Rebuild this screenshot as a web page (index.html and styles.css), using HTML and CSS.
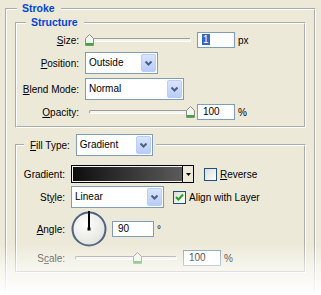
FILE: index.html
```html
<!DOCTYPE html>
<html lang="en">
<head>
    <meta charset="UTF-8">
    <title>Stroke</title>
    <link rel="stylesheet" href="styles.css">
</head>
<body>
    <fieldset class="group stroke">
        <legend class="title">Stroke</legend>

        <fieldset class="group structure">
            <legend class="title">Structure</legend>
            <div class="form form-structure">
                <label><u>S</u>ize:</label>
                <div class="ctl">
                    <div class="slider">
                        <div class="track"></div>
                        <svg class="thumb" style="left: 0px" width="9" height="12" viewBox="0 0 9 12"><path d="M0.5 4.5 L4.5 0.5 L8.5 4.5 V11.5 H0.5 Z" fill="#f3f3ef" stroke="#8c8c86"/><rect x="1" y="9" width="7" height="2" fill="#2fb02f"/></svg>
                    </div>
                    <div class="field"><span class="hl">1</span></div>
                    <span class="unit">px</span>
                </div>

                <label><u>P</u>osition:</label>
                <div class="ctl">
                    <div class="select w-position">
                        <span>Outside</span>
                        <div class="drop"><svg width="7" height="5" viewBox="0 0 7 5"><path d="M0.5 0.5 L3.5 3.5 L6.5 0.5" fill="none" stroke="#4d6185" stroke-width="2"/></svg></div>
                    </div>
                </div>

                <label><u>B</u>lend Mode:</label>
                <div class="ctl">
                    <div class="select w-blend">
                        <span>Normal</span>
                        <div class="drop"><svg width="7" height="5" viewBox="0 0 7 5"><path d="M0.5 0.5 L3.5 3.5 L6.5 0.5" fill="none" stroke="#4d6185" stroke-width="2"/></svg></div>
                    </div>
                </div>

                <label><u>O</u>pacity:</label>
                <div class="ctl">
                    <div class="slider">
                        <div class="track"></div>
                        <svg class="thumb" style="left: 101px" width="9" height="12" viewBox="0 0 9 12"><path d="M0.5 4.5 L4.5 0.5 L8.5 4.5 V11.5 H0.5 Z" fill="#f3f3ef" stroke="#8c8c86"/><rect x="1" y="9" width="7" height="2" fill="#2fb02f"/></svg>
                    </div>
                    <div class="field">100</div>
                    <span class="unit">%</span>
                </div>
            </div>
        </fieldset>

        <fieldset class="group fill">
            <legend class="fill-legend">
                <label><u>F</u>ill Type:</label>
                <div class="select w-filltype">
                    <span>Gradient</span>
                    <div class="drop"><svg width="7" height="5" viewBox="0 0 7 5"><path d="M0.5 0.5 L3.5 3.5 L6.5 0.5" fill="none" stroke="#4d6185" stroke-width="2"/></svg></div>
                </div>
            </legend>
            <div class="form form-fill">
                <label>Gradient:</label>
                <div class="ctl">
                    <div class="gradbar">
                        <div class="swatch"></div>
                        <div class="gradarrow"><svg width="5" height="3" viewBox="0 0 5 3"><path d="M0 0 H5 L2.5 3 Z" fill="#000"/></svg></div>
                    </div>
                    <div class="check"></div>
                    <span class="check-label"><u>R</u>everse</span>
                </div>

                <label>St<u>y</u>le:</label>
                <div class="ctl">
                    <div class="select w-style">
                        <span>Linear</span>
                        <div class="drop"><svg width="7" height="5" viewBox="0 0 7 5"><path d="M0.5 0.5 L3.5 3.5 L6.5 0.5" fill="none" stroke="#4d6185" stroke-width="2"/></svg></div>
                    </div>
                    <div class="check check-on"><svg width="11" height="11" viewBox="0 0 11 11"><path d="M2 5 L4.5 7.5 L9 2.5" fill="none" stroke="#21a121" stroke-width="2"/></svg></div>
                    <span class="check-label">Align with Layer</span>
                </div>

                <label><u>A</u>ngle:</label>
                <div class="ctl">
                    <svg class="dial" width="36" height="36" viewBox="0 0 36 36">
                        <defs>
                            <radialGradient id="dialfill" cx="40%" cy="35%" r="70%">
                                <stop offset="0" stop-color="#ffffff"/>
                                <stop offset="1" stop-color="#e2e2dc"/>
                            </radialGradient>
                        </defs>
                        <circle cx="18" cy="18" r="16.5" fill="url(#dialfill)" stroke="#4e6384" stroke-width="2"/>
                        <line x1="18" y1="0" x2="18" y2="18" stroke="#000" stroke-width="2"/>
                        <rect x="16.5" y="16.5" width="3" height="3" fill="#000"/>
                    </svg>
                    <div class="field w-angle">90</div>
                    <span class="unit">°</span>
                </div>

                <label class="scale-label">S<u>c</u>ale:</label>
                <div class="ctl">
                    <div class="slider">
                        <div class="track"></div>
                        <svg class="thumb" style="left: 62px" width="9" height="12" viewBox="0 0 9 12"><path d="M0.5 4.5 L4.5 0.5 L8.5 4.5 V11.5 H0.5 Z" fill="#f3f3ef" stroke="#8c8c86"/><rect x="1" y="9" width="7" height="2" fill="#2fb02f"/></svg>
                    </div>
                    <div class="field">100</div>
                    <span class="unit">%</span>
                </div>
            </div>
        </fieldset>
    </fieldset>

    <div class="fade"></div>
</body>
</html>
```

FILE: styles.css
```css
body {
    margin: 0;
    width: 321px;
    height: 295px;
    overflow: hidden;
    position: relative;
    background-color: #ece9d8;
    font-family: "Liberation Sans", Arial, sans-serif;
    font-size: 10px;
    color: #000;
}

u {
    text-decoration: underline;
    text-underline-offset: 1px;
}

/* Etched group boxes */
.group {
    margin: 0;
    border: 2px groove #fff;
    min-inline-size: 0;
}

.stroke {
    margin: 2px 5px 0 5px;
    padding: 1px 8px 20px 8px;
}

.structure {
    padding: 3px 0 6px 4px;
}

.fill {
    margin-top: 6px;
    padding: 9px 0 5px 4px;
}

.title {
    font-size: 10.5px;
    font-weight: bold;
    color: #0046d5;
    line-height: 13px;
    padding: 0 6px 0 5px;
}

.stroke > .title {
    margin-left: 2px;
}

.structure > .title {
    margin-left: 5px;
}

.fill-legend {
    display: flex;
    align-items: center;
    gap: 6px;
    margin-left: 3px;
    padding: 0 3px 0 6px;
}

/* Label / control rows */
.form {
    display: grid;
    align-items: center;
    column-gap: 6px;
}

.form-structure {
    grid-template-columns: 58px auto;
    row-gap: 4px;
}

.form-fill {
    grid-template-columns: 44px auto;
    row-gap: 3px;
}

.form label {
    text-align: right;
    white-space: nowrap;
}

.scale-label {
    color: #222;
}

.ctl {
    display: flex;
    align-items: center;
}

/* Sliders */
.slider {
    position: relative;
    width: 110px;
    height: 12px;
    margin-right: 2px;
}

.track {
    margin: 4px 4px 0 4px;
    height: 2px;
    background-color: #f4f3ee;
    border: 1px solid;
    border-color: #9d9c99 #fff #fff #9d9c99;
    border-radius: 2px;
}

.thumb {
    position: absolute;
    top: 0;
}

/* Text fields */
.field {
    width: 38px;
    height: 16px;
    box-sizing: border-box;
    border: 1px solid #7f9db9;
    background-color: #fff;
    padding-left: 5px;
    line-height: 14px;
}

.w-angle {
    width: 42px;
    margin-left: 5px;
}

.hl {
    background-color: #316ac5;
    color: #fff;
    padding: 0 1px;
    margin-left: -1px;
}

.unit {
    margin-left: 3px;
}

/* Drop-down lists */
.select {
    display: flex;
    height: 22px;
    box-sizing: border-box;
    border: 1px solid #7f9db9;
    background-color: #fff;
}

.select span {
    flex: 1;
    padding-left: 3px;
    line-height: 20px;
}

.drop {
    width: 15px;
    margin: 1px;
    box-sizing: border-box;
    border: 1px solid #bccdf5;
    border-radius: 2px;
    background: linear-gradient(#dae5fd, #b8ccf8);
    display: flex;
    align-items: center;
    justify-content: center;
}

.w-position { width: 73px; }
.w-blend { width: 99px; }
.w-filltype { width: 77px; }
.w-style { width: 93px; }

/* Gradient picker */
.gradbar {
    display: flex;
    width: 123px;
    height: 18px;
    box-sizing: border-box;
    border: 1px solid #000;
    background-color: #ece9d8;
}

.swatch {
    flex: 1;
    border: 1px solid #f6f4ec;
    border-right: none;
    background: linear-gradient(90deg, #0e0e0e, #5b5b5b);
}

.gradarrow {
    width: 10px;
    border-left: 1px solid #000;
    display: flex;
    align-items: center;
    justify-content: center;
}

/* Check boxes */
.check {
    width: 13px;
    height: 13px;
    box-sizing: border-box;
    border: 1px solid #1c5180;
    background: linear-gradient(135deg, #dcdcd7, #fff);
    margin-left: 10px;
    display: flex;
    align-items: center;
    justify-content: center;
}

.check-on {
    margin-left: 9px;
}

.check-label {
    margin-left: 3px;
    white-space: nowrap;
}

.dial {
    display: block;
}

/* Fade at the bottom of the shot */
.fade {
    position: absolute;
    left: 0;
    right: 0;
    bottom: 0;
    height: 52px;
    background: linear-gradient(rgba(255, 255, 255, 0), rgba(255, 255, 255, 0.55) 45%, rgba(255, 255, 255, 0.98));
    pointer-events: none;
}
```
